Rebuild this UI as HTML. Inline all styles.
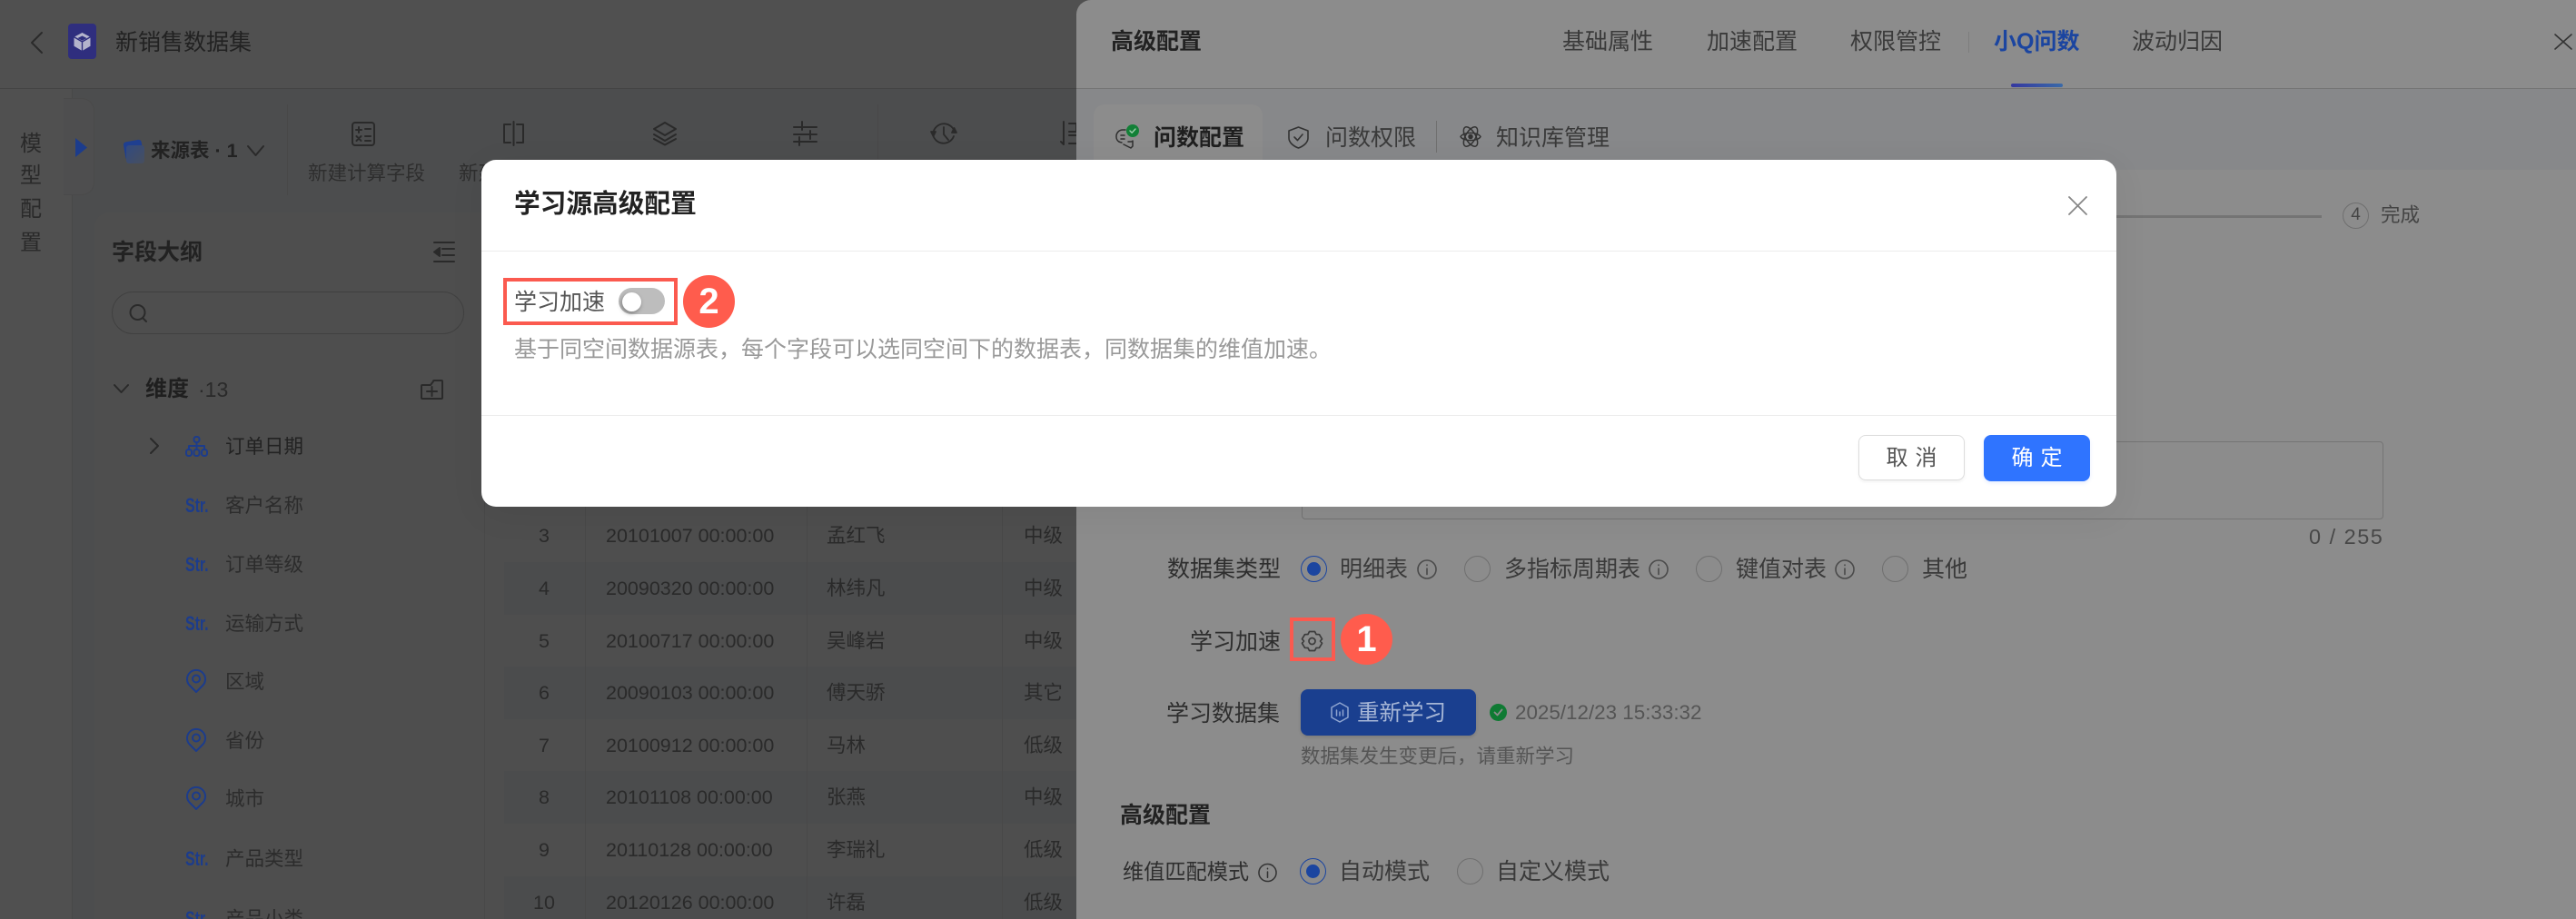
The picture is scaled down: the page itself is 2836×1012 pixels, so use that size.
<!DOCTYPE html>
<html lang="zh"><head><meta charset="utf-8"><title>学习源高级配置</title>
<style>
*{box-sizing:border-box;margin:0;padding:0}
html,body{width:2836px;height:1012px;overflow:hidden;background:#4f4f4f}
body{position:relative;font-family:"Liberation Sans","Noto Sans CJK SC",sans-serif;color:#2a2a2a}
.a{position:absolute}
.t{position:absolute;white-space:nowrap;line-height:40px;height:40px;font-size:21.5px}
.b{font-weight:700}
.f{font-size:25px}
svg{position:absolute;overflow:visible;fill:none;stroke-linecap:round;stroke-linejoin:round}
.k{stroke:#2a2a2a;stroke-width:2}
.n{stroke:#1c3c8c;stroke-width:2}
.s{color:#1c3c8c;font-size:22px;font-weight:700;transform:scaleX(.72);transform-origin:left center;left:204px}
.r{position:absolute;width:29px;height:29px;border-radius:50%;border:1.5px solid #6f6f6f}
.r.on{border-color:#1b45a0}
.r.on:after{content:"";position:absolute;left:5.5px;top:5.5px;width:15px;height:15px;border-radius:50%;background:#1b45a0}
.i{stroke:#4a4a4a;stroke-width:1.6}
.d{color:#3a3a3a}
.hl{position:absolute;border:4px solid #fb5a4f}
.c{position:absolute;width:57px;border-radius:50%;background:#ff5c4d;color:#fff;font-weight:700;font-size:40px;text-align:center}
.v{position:absolute;width:1px;background:#484848}
</style></head><body>

<!-- LEFT PAGE -->
<div class="a" style="left:0;top:0;width:1200px;height:97px;background:#505050"></div>
<div class="a" style="left:0;top:97px;width:1200px;height:1px;background:#434343"></div>
<div class="a" style="left:0;top:98px;width:79px;height:914px;background:#505050"></div>
<div class="a" style="left:79px;top:98px;width:1120px;height:914px;background:#4c4d4e"></div>
<div class="v" style="left:79px;top:98px;height:914px"></div>
<div class="a" style="left:70px;top:108px;width:34px;height:107px;background:#4e4e4f;border-radius:0 14px 14px 0;border:1px solid #4a4a4a;border-left:0"></div>
<div class="a" style="left:104px;top:234px;width:430px;height:778px;background:#4e4e4e;border-radius:16px 0 0 0;border-right:1px solid #454545"></div>

<svg class="k" style="left:33px;top:35px" width="14" height="24" viewBox="0 0 14 24"><path d="M13 1 2 12l11 11"/></svg>
<div class="a" style="left:75px;top:26px;width:31px;height:39px;background:#2f2e7e;border-radius:4px"></div>
<svg style="left:81px;top:36px" width="19" height="20" viewBox="0 0 19 20"><path d="M9.5 0 18.500 4.800v10L9.500 20 .5 14.800v-10z" fill="#b4b4cc"/><path d="M9.500 3.500 14.500 6 9.500 8.800 4.500 6z" fill="#2f2e7e"/><path d="M9.500 10v10M1 5l8.500 5L18 5" stroke="#2f2e7e" stroke-width="1.400"/></svg>
<div class="t f" style="left:127px;top:27px;color:#222">新销售数据集</div>

<div class="t" style="left:22px;top:139px;font-size:24px">模</div>
<div class="t" style="left:22px;top:174px;font-size:24px">型</div>
<div class="t" style="left:22px;top:211px;font-size:24px">配</div>
<div class="t" style="left:22px;top:248px;font-size:24px">置</div>
<svg style="left:83px;top:152px" width="13" height="21" viewBox="0 0 13 21"><path d="M0 0 13 10.500 0 21z" fill="#1c3c8c"/></svg>

<!-- toolbar -->
<div class="a" style="left:137px;top:155px;width:20px;height:20px;background:#1f3f90;border-radius:3px;transform:rotate(-10deg)"></div>
<div class="a" style="left:139px;top:160px;width:20px;height:20px;background:linear-gradient(135deg,#324a80,#474f5e);border-radius:3px"></div>
<div class="t b" style="left:166px;top:146px;font-size:21.5px;color:#222">来源表 · 1</div>
<svg class="k" style="left:272px;top:160px" width="19" height="12" viewBox="0 0 19 12"><path d="M1 1l8.500 10L18 1"/></svg>
<div class="v" style="left:316px;top:115px;height:100px"></div>
<svg class="k" style="left:387px;top:134px" width="26" height="27" viewBox="0 0 26 27"><rect x="1" y="1" width="24" height="25" rx="3"/><path d="M5 9h6M8 6v6M15 8h6M5.500 16l5 5M10.500 16l-5 5M15 16h6M15 21h6"/></svg>
<div class="t" style="left:339px;top:171px;color:#2e2e2e">新建计算字段</div>
<svg class="k" style="left:553px;top:133px" width="25" height="28" viewBox="0 0 25 28"><path d="M9 4H2v20h7M16 4h7v20h-7M12.500 1v26"/></svg>
<div class="t" style="left:505px;top:171px;color:#2e2e2e">新建</div>
<svg class="k" style="left:719px;top:134px" width="26" height="26" viewBox="0 0 26 26"><path d="M13 1 25 8 13 15 1 8zM1 14l12 7 12-7M1 19l12 6.500L25 19"/></svg>
<svg class="k" style="left:873px;top:133px" width="27" height="28" viewBox="0 0 27 28"><path d="M1 7h25M1 15h25M1 23h25M10 1v9M19 11v9M7 18v9"/></svg>
<div class="v" style="left:966px;top:115px;height:60px"></div>
<svg class="k" style="left:1025px;top:134px;stroke-width:1.800" width="28" height="27" viewBox="0 0 28 27"><path d="M3 10a12 12 0 0 1 23 2M25 16a12 12 0 0 1-23-2M14 6v8l5 6"/><path d="M0 11h5l-2.500 5zM23 12h5l-2.500-5z" fill="#2a2a2a"/></svg>
<svg class="k" style="left:1167px;top:133px" width="18" height="28" viewBox="0 0 18 28"><path d="M4 1v25M1 23l3 3M10 3h8M10 12h8v-9M10 16h8M10 25h8"/></svg>

<!-- field outline -->
<div class="t b" style="left:123px;top:258px;font-size:25px;color:#222">字段大纲</div>
<svg class="k" style="left:477px;top:266px" width="24" height="23" viewBox="0 0 24 23"><path d="M1 1h22M10 8h13M10 15h13M1 22h22"/><path d="M7 7v9l-6-4.500z" fill="#2a2a2a"/></svg>
<div class="a" style="left:123px;top:321px;width:388px;height:47px;border:1.5px solid #404040;border-radius:24px"></div>
<svg class="k" style="left:142px;top:335px" width="21" height="20" viewBox="0 0 21 20"><circle cx="9.500" cy="9" r="8"/><path d="M15 15l4 4"/></svg>
<svg class="k" style="left:125px;top:423px" width="17" height="11" viewBox="0 0 17 11"><path d="M1 1l7.500 8L16 1"/></svg>
<div class="t b" style="left:160px;top:409px;font-size:24px;color:#1f1f1f">维度</div>
<div class="t" style="left:218px;top:409px;font-size:23px;color:#2a2a2a">·13</div>
<svg class="k" style="left:463px;top:418px" width="25" height="22" viewBox="0 0 25 22"><path d="M1 20V7a1 1 0 0 1 1-1h9l3-4a1 1 0 0 1 1-1h8a1 1 0 0 1 1 1v18a1 1 0 0 1-1 1H2a1 1 0 0 1-1-1zM7 13h11M12.500 8v10"/></svg>

<svg class="k" style="left:165px;top:482px" width="10" height="18" viewBox="0 0 10 18"><path d="M1 1l8 8-8 8"/></svg>
<svg class="n" style="left:204px;top:480px" width="25" height="23" viewBox="0 0 25 23"><rect x="9.500" y="1" width="6" height="6" rx="2.500"/><rect x="1" y="15" width="6" height="7" rx="2.500"/><rect x="9.500" y="15" width="6" height="7" rx="2.500"/><rect x="18" y="15" width="6" height="7" rx="2.500"/><path d="M12.500 7v8M4 15v-4h17v4"/></svg>
<div class="t" style="left:248px;top:472px;color:#222">订单日期</div>
<div class="t s" style="top:537px">Str.</div><div class="t" style="left:248px;top:537px;color:#2c2c2c">客户名称</div>
<div class="t s" style="top:602px">Str.</div><div class="t" style="left:248px;top:602px;color:#2c2c2c">订单等级</div>
<div class="t s" style="top:667px">Str.</div><div class="t" style="left:248px;top:667px;color:#2c2c2c">运输方式</div>
<svg class="n" style="left:205px;top:737px" width="22" height="26" viewBox="0 0 22 26"><path d="M11 25 3.500 17.500a10 10 0 1 1 15 0z"/><circle cx="11" cy="10.500" r="4"/></svg>
<div class="t" style="left:248px;top:731px;color:#2c2c2c">区域</div>
<svg class="n" style="left:205px;top:802px" width="22" height="26" viewBox="0 0 22 26"><path d="M11 25 3.500 17.500a10 10 0 1 1 15 0z"/><circle cx="11" cy="10.500" r="4"/></svg>
<div class="t" style="left:248px;top:796px;color:#2c2c2c">省份</div>
<svg class="n" style="left:205px;top:866px" width="22" height="26" viewBox="0 0 22 26"><path d="M11 25 3.500 17.500a10 10 0 1 1 15 0z"/><circle cx="11" cy="10.500" r="4"/></svg>
<div class="t" style="left:248px;top:860px;color:#2c2c2c">城市</div>
<div class="t s" style="top:926px">Str.</div><div class="t" style="left:248px;top:926px;color:#2c2c2c">产品类型</div>
<div class="t s" style="top:992px">Str.</div><div class="t" style="left:248px;top:992px;color:#2c2c2c">产品小类</div>

<!-- table -->
<div class="a" style="left:534px;top:558px;width:651px;height:454px;background:#4e4e4e"></div>
<div class="a" style="left:555px;top:619px;width:630px;height:58px;background:#4b4c4d"></div>
<div class="a" style="left:555px;top:734px;width:630px;height:58px;background:#4b4c4d"></div>
<div class="a" style="left:555px;top:849px;width:630px;height:58px;background:#4b4c4d"></div>
<div class="a" style="left:555px;top:965px;width:630px;height:47px;background:#4b4c4d"></div>
<div class="v" style="left:533px;top:558px;height:454px"></div>
<div class="v" style="left:644px;top:558px;height:454px"></div>
<div class="v" style="left:888px;top:558px;height:454px"></div>
<div class="v" style="left:1103px;top:558px;height:454px"></div>

<div class="t" style="left:593px;top:570px">3</div><div class="t" style="left:667px;top:570px">20101007 00:00:00</div><div class="t" style="left:910px;top:570px">孟红飞</div><div class="t" style="left:1127px;top:570px">中级</div>
<div class="t" style="left:593px;top:628px">4</div><div class="t" style="left:667px;top:628px">20090320 00:00:00</div><div class="t" style="left:910px;top:628px">林纬凡</div><div class="t" style="left:1127px;top:628px">中级</div>
<div class="t" style="left:593px;top:686px">5</div><div class="t" style="left:667px;top:686px">20100717 00:00:00</div><div class="t" style="left:910px;top:686px">吴峰岩</div><div class="t" style="left:1127px;top:686px">中级</div>
<div class="t" style="left:593px;top:743px">6</div><div class="t" style="left:667px;top:743px">20090103 00:00:00</div><div class="t" style="left:910px;top:743px">傅天骄</div><div class="t" style="left:1127px;top:743px">其它</div>
<div class="t" style="left:593px;top:801px">7</div><div class="t" style="left:667px;top:801px">20100912 00:00:00</div><div class="t" style="left:910px;top:801px">马林</div><div class="t" style="left:1127px;top:801px">低级</div>
<div class="t" style="left:593px;top:858px">8</div><div class="t" style="left:667px;top:858px">20101108 00:00:00</div><div class="t" style="left:910px;top:858px">张燕</div><div class="t" style="left:1127px;top:858px">中级</div>
<div class="t" style="left:593px;top:916px">9</div><div class="t" style="left:667px;top:916px">20110128 00:00:00</div><div class="t" style="left:910px;top:916px">李瑞礼</div><div class="t" style="left:1127px;top:916px">低级</div>
<div class="t" style="left:587px;top:974px">10</div><div class="t" style="left:667px;top:974px">20120126 00:00:00</div><div class="t" style="left:910px;top:974px">许磊</div><div class="t" style="left:1127px;top:974px">低级</div>

<!-- DRAWER -->
<div class="a" style="left:1185px;top:0;width:1651px;height:1012px;background:#8c8c8c;border-radius:16px 0 0 0;overflow:hidden">
  <div class="a" style="left:0;top:97px;width:1651px;height:1px;background:#747474"></div>
  <div class="a" style="left:0;top:98px;width:1651px;height:89px;background:#87888a"></div>
  <div class="a" style="left:19px;top:115px;width:186px;height:72px;background:#8c8c8c;border-radius:12px 12px 0 0"></div>
</div>
<div class="t f b" style="left:1223px;top:26px;color:#222">高级配置</div>
<div class="t f d" style="left:1720px;top:26px">基础属性</div>
<div class="t f d" style="left:1879px;top:26px">加速配置</div>
<div class="t f d" style="left:2037px;top:26px">权限管控</div>
<div class="a" style="left:2167px;top:35px;width:1px;height:23px;background:#7d7d7d"></div>
<div class="t f b" style="left:2195px;top:26px;color:#1b45a0">小Q问数</div>
<div class="a" style="left:2214px;top:92px;width:57px;height:4px;border-radius:2px;background:linear-gradient(90deg,#3538a0,#3a6aa8)"></div>
<div class="t f d" style="left:2347px;top:26px">波动归因</div>
<svg style="left:2812px;top:37px" width="20" height="18" viewBox="0 0 20 18"><path d="M1 1l18 16M19 1 1 17" stroke="#333" stroke-width="1.600"/></svg>

<svg style="left:1228px;top:142px;stroke:#2f2f2f;stroke-width:1.500" width="22" height="22" viewBox="0 0 22 22"><path d="M11 1H8a7 7 0 0 0-7 7v1a6 6 0 0 0 4 5.500l2 .5M14 14c3 0 5 0 5-1v6l-2 2-8-4M6 7h4M6 11h4"/></svg>
<svg style="left:1240px;top:137px" width="14" height="14" viewBox="0 0 14 14"><circle cx="7" cy="7" r="7" fill="#128037"/><path d="M4 7l2.200 2.200L10 5" stroke="#9fd0ae" stroke-width="1.400"/></svg>
<div class="t f b" style="left:1270px;top:132px;color:#1f1f1f">问数配置</div>
<svg style="left:1418px;top:139px;stroke:#333;stroke-width:1.600" width="23" height="25" viewBox="0 0 23 25"><path d="M11.500 1 22 5v8c0 5-5 9-10.500 11C6 22 1 18 1 13V5zM7 12l3.500 3.500L16 9"/></svg>
<div class="t f d" style="left:1459px;top:132px">问数权限</div>
<div class="a" style="left:1581px;top:133px;width:1px;height:35px;background:#707070"></div>
<svg style="left:1606px;top:137px;stroke:#333;stroke-width:1.500" width="26" height="27" viewBox="0 0 26 27"><ellipse cx="13" cy="13.500" rx="12" ry="5.500" transform="rotate(60 13 13.500)"/><ellipse cx="13" cy="13.500" rx="12" ry="5.500" transform="rotate(-60 13 13.500)"/><path d="M2 13.500C5 8 21 8 24 13.500 21 19 5 19 2 13.500z"/><circle cx="13" cy="13.500" r="2" fill="#333"/></svg>
<div class="t f d" style="left:1647px;top:132px">知识库管理</div>

<!-- steps -->
<div class="a" style="left:2330px;top:237px;width:226px;height:3px;background:#747474"></div>
<div class="a" style="left:2579px;top:223px;width:29px;height:29px;border:1.500px solid #6f6f6f;border-radius:50%;text-align:center;line-height:26px;font-size:19px;color:#444">4</div>
<div class="t" style="left:2621px;top:217px;color:#444">完成</div>

<!-- form -->
<div class="a" style="left:1433px;top:486px;width:1191px;height:86px;border:1.500px solid #747474;border-radius:4px"></div>
<div class="t" style="left:2542px;top:571px;font-size:23.500px;letter-spacing:1.500px;color:#484848">0 / 255</div>

<div class="t f" style="left:1285px;top:607px;color:#2e2e2e">数据集类型</div>
<div class="r on" style="left:1432px;top:612px"></div>
<div class="t f d" style="left:1475px;top:607px">明细表</div>
<svg class="i" style="left:1560px;top:616px" width="22" height="22" viewBox="0 0 22 22"><circle cx="11" cy="11" r="10"/><path d="M11 10v6.500M11 6v.5"/></svg>
<div class="r" style="left:1612px;top:612px"></div>
<div class="t f d" style="left:1656px;top:607px">多指标周期表</div>
<svg class="i" style="left:1815px;top:616px" width="22" height="22" viewBox="0 0 22 22"><circle cx="11" cy="11" r="10"/><path d="M11 10v6.500M11 6v.5"/></svg>
<div class="r" style="left:1867px;top:612px"></div>
<div class="t f d" style="left:1911px;top:607px">键值对表</div>
<svg class="i" style="left:2020px;top:616px" width="22" height="22" viewBox="0 0 22 22"><circle cx="11" cy="11" r="10"/><path d="M11 10v6.500M11 6v.5"/></svg>
<div class="r" style="left:2072px;top:612px"></div>
<div class="t f d" style="left:2116px;top:607px">其他</div>

<div class="t f" style="left:1310px;top:687px;color:#2e2e2e">学习加速</div>
<div class="hl" style="left:1420px;top:680px;width:50px;height:48px"></div>
<svg style="left:1433px;top:694px;stroke:#3c3c3c;stroke-width:1.700" width="23" height="24" viewBox="0 0 23 24"><path d="M8.500 1.500h6l1.500 3 3.500.2 3 5-2 2.300 2 2.300-3 5-3.500.2-1.500 3h-6l-1.500-3-3.500-.2-3-5 2-2.300-2-2.300 3-5 3.500-.2z"/><circle cx="11.500" cy="12" r="3.500"/></svg>
<div class="c" style="left:1476px;top:676px;height:56px;line-height:56px">1</div>

<div class="t f" style="left:1284px;top:766px;color:#2e2e2e">学习数据集</div>
<div class="a" style="left:1432px;top:759px;width:193px;height:51px;background:#1a3f8f;border-radius:8px;box-shadow:0 2px 3px rgba(0,0,0,.12)"></div>
<svg style="left:1465px;top:773px;stroke:#8fa5d0;stroke-width:1.500" width="20" height="23" viewBox="0 0 20 23"><path d="M10 1 19 6v11l-9 5-9-5V6zM6.500 9v6M10 11v4M13.500 9v6"/></svg>
<div class="t" style="left:1494px;top:766px;font-size:24.500px;color:#a6b6d6">重新学习</div>
<svg style="left:1640px;top:775px" width="19" height="19" viewBox="0 0 19 19"><circle cx="9.500" cy="9.500" r="9.500" fill="#0f7a33"/><path d="M5.500 9.500l3 3 5-6" stroke="#8c8c8c" stroke-width="1.800"/></svg>
<div class="t" style="left:1668px;top:765px;font-size:22.400px;color:#555">2025/12/23 15:33:32</div>
<div class="t" style="left:1432px;top:813px;color:#555">数据集发生变更后，请重新学习</div>
<div class="t f b" style="left:1233px;top:878px;color:#222">高级配置</div>
<div class="t" style="left:1236px;top:940px;font-size:23.200px;color:#2e2e2e">维值匹配模式</div>
<svg class="i" style="left:1385px;top:950px;stroke:#333" width="21" height="22" viewBox="0 0 22 22"><circle cx="11" cy="11" r="10"/><path d="M11 10v6.500M11 6v.5"/></svg>
<div class="r on" style="left:1431px;top:945px"></div>
<div class="t f d" style="left:1474px;top:940px">自动模式</div>
<div class="r" style="left:1604px;top:945px"></div>
<div class="t f d" style="left:1647px;top:940px">自定义模式</div>

<!-- MODAL -->
<div class="a" style="left:530px;top:176px;width:1800px;height:382px;background:#fff;border-radius:16px;box-shadow:0 8px 40px rgba(0,0,0,.06)">
  <div class="a" style="left:0;top:100px;width:1800px;height:1px;background:#ececec"></div>
  <div class="a" style="left:0;top:281px;width:1800px;height:1px;background:#ececec"></div>
</div>
<div class="t b" style="left:566px;top:205px;font-size:28.700px;color:#222">学习源高级配置</div>
<svg style="left:2277px;top:216px" width="21" height="21" viewBox="0 0 21 21"><path d="M1 1l19 19M20 1 1 20" stroke="#888" stroke-width="1.800"/></svg>

<div class="hl" style="left:554px;top:306px;width:192px;height:52px"></div>
<div class="t f" style="left:566px;top:313px;color:#555">学习加速</div>
<div class="a" style="left:681px;top:317px;width:51px;height:29px;background:#bdbdbd;border-radius:15px"></div>
<div class="a" style="left:685px;top:322px;width:21px;height:21px;background:#fff;border-radius:50%;box-shadow:-1px 2px 5px rgba(0,0,0,.35)"></div>
<div class="c" style="left:752px;top:303px;height:58px;line-height:58px">2</div>
<div class="t f" style="left:566px;top:365px;color:#999">基于同空间数据源表，每个字段可以选同空间下的数据表，同数据集的维值加速。</div>

<div class="a" style="left:2046px;top:479px;width:117px;height:50px;background:#fff;border:1.500px solid #ddd;border-radius:8px;box-shadow:0 2px 3px rgba(0,0,0,.05);text-align:center;line-height:49px;font-size:24px;letter-spacing:8px;text-indent:8px;color:#555">取消</div>
<div class="a" style="left:2184px;top:479px;width:117px;height:51px;background:#2f74ff;border-radius:8px;box-shadow:0 2px 4px rgba(47,116,255,.12);text-align:center;line-height:51px;font-size:24px;letter-spacing:8px;text-indent:8px;color:#fff">确定</div>

</body></html>
